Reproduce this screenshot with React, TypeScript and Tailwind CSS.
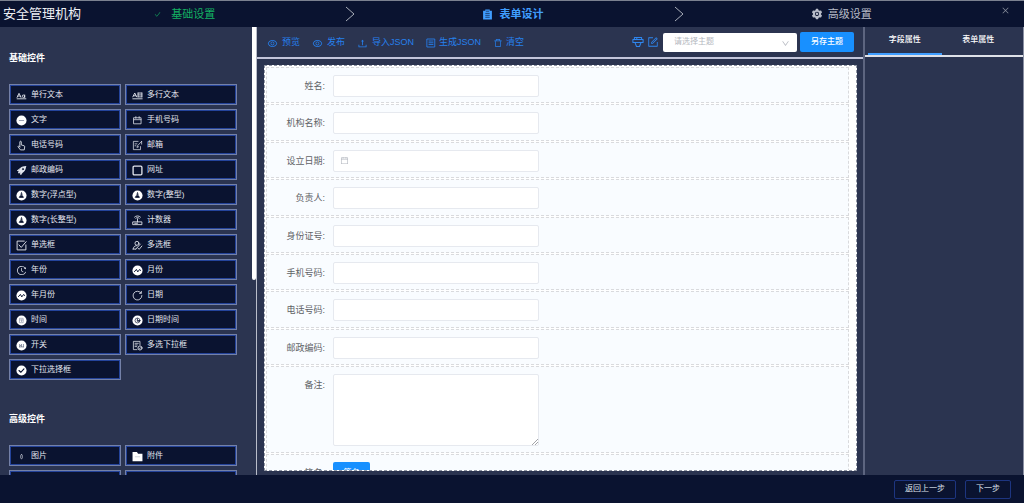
import type { ReactNode } from 'react';
import {
  AiFillSetting,
  AiOutlineCalendar,
  AiOutlineCheck,
  AiOutlineClose,
  AiOutlineDelete,
  AiOutlineDown,
  AiOutlineEye,
  AiOutlineForm,
  AiOutlineHistory,
  AiOutlineUpload,
} from 'react-icons/ai';

function Svg({ children, className = 'size-[11px]' }: { children: ReactNode; className?: string }) {
  return (
    <svg
      viewBox="0 0 20 20"
      className={className}
      fill="none"
      stroke="currentColor"
      strokeWidth="1.6"
      strokeLinecap="round"
      strokeLinejoin="round"
      aria-hidden="true"
    >
      {children}
    </svg>
  );
}

function Disc({ children }: { children: ReactNode }) {
  return (
    <Svg>
      <circle cx="10" cy="10" r="9.2" fill="#fff" stroke="none" />
      <g stroke="#0a1330">{children}</g>
    </Svg>
  );
}

const icons: Record<string, ReactNode> = {
  text: (
    <Svg>
      <path d="M2 13.5 5.5 6 9 13.5M3.3 11h4.4M2 16h16" />
      <circle cx="13.5" cy="11.3" r="2.2" />
      <path d="M15.8 9v4.8" />
    </Svg>
  ),
  textarea: (
    <Svg>
      <path d="M1.5 12.5 5 5.5l3.5 7M3 10.5h4M1.5 16h17M11 5.5h7M11 9h7M11 12.5h7M11 5.5v7M18 5.5v7" />
    </Svg>
  ),
  words: (
    <Disc>
      <path d="M6 10h8" stroke="#8d94a8" />
    </Disc>
  ),
  phone: (
    <Svg>
      <path d="M3.5 5h13v11h-13zM3.5 8.5h13M7 3v3M13 3v3" strokeWidth="1.4" />
    </Svg>
  ),
  touch: (
    <Svg>
      <path d="M7 12.500V3.500a1.300 1.300 0 0 1 2.600 0V9l5 1.400c1 .3 1.400 1 1.200 2L15 18H8L3.500 12c.6-1.300 2-1.400 3.500.5" />
    </Svg>
  ),
  mail: (
    <Svg>
      <path d="M11 2.5H2.5v15h13V12M17.5 2.5 10 10.5l-1 3 3-1.2M5.5 7H9M5.5 10.5H7M17.5 2.5v5" strokeWidth="1.3" />
    </Svg>
  ),
  postcode: (
    <Svg>
      <path
        d="M17.5 3c-5 0-9 1-11 4.5L2.5 10l3.3 1-1.3 3.5L8 13.8 8.8 17.500l2.700-3.700C15 12 17 8.500 17.500 3Z"
        fill="currentColor"
      />
      <circle cx="12.500" cy="7.500" r="1" stroke="#0a1330" />
    </Svg>
  ),
  url: (
    <Svg>
      <rect x="2" y="2" width="16" height="16" rx="2" strokeWidth="2.400" />
    </Svg>
  ),
  number: (
    <Disc>
      <path d="M10 4.500v5M8.300 7.500h3.400M6.500 13.500h7l-1.500-3H8z" fill="#0a1330" strokeWidth="1.300" />
    </Disc>
  ),
  counter: (
    <Svg>
      <path d="M2 12.500h16v5H2zM10 12.500V7M5 15h5M6.800 6a4.200 4.200 0 0 1 6.400 0M4.600 3.800a7.300 7.300 0 0 1 10.800 0" />
    </Svg>
  ),
  radio: (
    <Svg>
      <path d="M18 9v9H2V2h13M5.500 9l4 4.500L18.500 3" strokeWidth="1.700" />
    </Svg>
  ),
  checkbox: (
    <Svg>
      <circle cx="9" cy="6" r="3.600" />
      <path d="M2 16.500c.5-4 3-6 6-6.200M2 16.500h5M15 7.500l-8 9M10.500 14.500l2.500 2.500 5-6" />
    </Svg>
  ),
  history: <AiOutlineHistory className="size-[11px]" />,
  month: (
    <Disc>
      <path d="m4.500 12 3.500-4 2.500 4.500L14 8l1.500 2" strokeWidth="1.800" />
    </Disc>
  ),
  date: (
    <Svg>
      <path d="M16.500 5.500A8 8 0 1 0 18 10M17 2.500v3.500h-3.500" strokeWidth="1.500" />
    </Svg>
  ),
  time: (
    <Disc>
      <path d="M7 6h6v8H7zM7 9h6M10 9v3" stroke="#8d94a8" strokeWidth="1.200" />
    </Disc>
  ),
  datetime: (
    <Disc>
      <circle cx="10" cy="10" r="4.500" strokeWidth="1.200" />
      <path d="M10 7v3h4v1.500h-4z" fill="#0a1330" strokeWidth="1" />
    </Disc>
  ),
  toggle: (
    <Disc>
      <path d="M6.500 12.500V8L10 12V8M13.500 8v4.500M6.500 12.500h7" stroke="#59617c" strokeWidth="1.200" />
    </Disc>
  ),
  multi: (
    <Svg>
      <path d="M9 17.500H2.500v-15h12V9M5.500 6h6M5.500 9h4M5.500 12h3" strokeWidth="1.400" />
      <circle cx="14.500" cy="14.500" r="3.700" />
      <path d="m12.800 14.500 1.400 1.300 2.200-2.500" strokeWidth="1.200" />
    </Svg>
  ),
  select: (
    <Disc>
      <path d="m5.500 10 3.200 3.200L14.500 7" strokeWidth="2" />
    </Disc>
  ),
  image: (
    <Svg>
      <rect x="8.500" y="6.500" width="3" height="7.500" rx="1.500" strokeWidth="1.100" />
    </Svg>
  ),
  file: (
    <Svg>
      <path d="M1 2h8l2 3h8v13.500H1z" fill="#fff" stroke="none" />
      <path d="M6 10.500h8" stroke="#b9bdca" strokeWidth="1.200" />
    </Svg>
  ),
};

const basic: [string, string][] = [
  ['text', '单行文本'],
  ['textarea', '多行文本'],
  ['words', '文字'],
  ['phone', '手机号码'],
  ['touch', '电话号码'],
  ['mail', '邮箱'],
  ['postcode', '邮政编码'],
  ['url', '网址'],
  ['number', '数字(浮点型)'],
  ['number', '数字(整型)'],
  ['number', '数字(长整型)'],
  ['counter', '计数器'],
  ['radio', '单选框'],
  ['checkbox', '多选框'],
  ['history', '年份'],
  ['month', '月份'],
  ['month', '年月份'],
  ['date', '日期'],
  ['time', '时间'],
  ['datetime', '日期时间'],
  ['toggle', '开关'],
  ['multi', '多选下拉框'],
  ['select', '下拉选择框'],
];

const advanced: [string, string][] = [
  ['image', '图片'],
  ['file', '附件'],
  ['', ''],
  ['', ''],
];

const fields = ['姓名', '机构名称', '设立日期', '负责人', '身份证号', '手机号码', '电话号码', '邮政编码'];

function Palette({ title, items }: { title: string; items: [string, string][] }) {
  return (
    <section>
      <h2 className="text-[9px] leading-4 font-bold text-white">{title}</h2>
      <div className="mt-[18px] grid grid-cols-2 gap-1">
        {items.map(([icon, label], i) => (
          <button
            key={i}
            type="button"
            className="flex h-[21px] items-center gap-1 border border-[#7481a8] bg-[#0a1330] pt-px pl-[6px] text-[8px] text-[#e3e6ee] inset-ring inset-ring-[#24439a]"
          >
            {icons[icon]}
            {label}
          </button>
        ))}
      </div>
    </section>
  );
}

function StepArrow() {
  return (
    <svg viewBox="0 0 10 16" className="h-4 w-[10px] text-[#a9aeb9]" fill="none" stroke="currentColor" aria-hidden="true">
      <path d="m1 1 8 7-8 7" />
    </svg>
  );
}

function Step({ icon, label, tone, last }: { icon: ReactNode; label: string; tone: string; last?: boolean }) {
  return (
    <li className="flex items-center">
      <div className={`flex flex-1 items-center justify-center pr-[3px] text-[11px] ${tone}`}>
        <span className="flex w-[17px] items-center">{icon}</span>
        {label}
      </div>
      {last ? <span className="w-[10px]" /> : <StepArrow />}
    </li>
  );
}

function Tool({ icon, label, tight }: { icon: ReactNode; label: string; tight?: boolean }) {
  return (
    <button type="button" className={tight ? 'flex items-center gap-[3px]' : 'flex items-center gap-1'}>
      {icon}
      {label}
    </button>
  );
}

const rowClass = 'flex items-start gap-2 border border-dashed border-[#d9dadd] bg-[#f9fcff] pt-[7px]';
const labelClass = 'w-[58px] shrink-0 text-right text-[9px] leading-[22px] text-[#606266]';

export default function App() {
  return (
    <div className="flex h-screen flex-col overflow-hidden bg-[#0a1330] font-['Liberation_Sans','Noto_Sans_CJK_SC',sans-serif]">
      <header className="relative h-[27px] shrink-0 border-t border-[#7b8190]">
        <h1 className="absolute top-0 left-[3px] text-[13px] leading-[26px] text-[#eceef3]">安全管理机构</h1>
        <ol className="mr-[12px] ml-[27px] grid h-full grid-cols-3">
          <Step icon={<AiOutlineCheck className="size-[7px]" />} label="基础设置" tone="text-[#13b163]" />
          <Step
            icon={
              <svg viewBox="0 0 20 20" className="size-[11px]" aria-hidden="true">
                <path d="M2 3h4V1h8v2h4v16H2z" fill="currentColor" />
                <path d="M6 8h8M6 11.500h8M6 15h8M7 4h6" stroke="#0a1330" strokeWidth="1.200" />
              </svg>
            }
            label="表单设计"
            tone="font-bold text-[#409eff]"
          />
          <Step icon={<AiFillSetting className="size-[12px]" />} label="高级设置" tone="text-[#b8bcc8]" last />
        </ol>
        <button type="button" aria-label="关闭" className="absolute top-[5px] right-[14px] text-[#878c9a]">
          <AiOutlineClose className="block size-[9px]" />
        </button>
      </header>

      <div className="flex min-h-0 flex-1">
        <aside className="flex w-[257px] shrink-0 overflow-hidden border-r border-[#b9bdca] bg-[#2b3450]">
          <div className="flex flex-1 flex-col gap-[31px] overflow-hidden pt-[23px] pr-[15px] pl-[9px]">
            <Palette title="基础控件" items={basic} />
            <Palette title="高级控件" items={advanced} />
          </div>
          <div className="h-[56.500%] w-1 rounded-b-sm bg-white" />
        </aside>

        <main className="flex min-w-0 flex-1 flex-col bg-[#2b3450]">
          <div className="flex h-8 shrink-0 items-center justify-between border-b-2 border-[#c3c5da] pr-[9px] pl-[10px]">
            <div className="flex items-center gap-3 pt-[2px] text-[9px] text-[#2680ee]">
              <Tool icon={<AiOutlineEye className="size-[11px]" />} label="预览" />
              <Tool icon={<AiOutlineEye className="size-[11px]" />} label="发布" />
              <Tool icon={<AiOutlineUpload className="size-[11px]" />} label="导入JSON" />
              <Tool
                tight
                icon={
                  <Svg className="size-[10px]">
                    <path d="M2.500 2h15v16h-15zM6 6h5M6 9.500h8M6 13h8M13 6h1" strokeWidth="1.700" />
                  </Svg>
                }
                label="生成JSON"
              />
              <Tool tight icon={<AiOutlineDelete className="size-[10px]" />} label="清空" />
            </div>
            <div className="flex items-center gap-[3px] text-[#2f86ee]">
              <button type="button" aria-label="主题">
                <Svg className="block size-3">
                  <path d="M4 6V2.500h12V6M1.500 6h17v5H15l-2.500 6.500h-5L5 11H1.500zM5 11h10M8 3v2" strokeWidth="1.700" />
                </Svg>
              </button>
              <button type="button" aria-label="编辑" className="mr-px">
                <AiOutlineForm className="block size-3" />
              </button>
              <div className="relative flex">
                <select
                  aria-label="请选择主题"
                  className="h-[19px] w-[134px] appearance-none rounded-[2px] bg-white pl-[11px] text-[8px] text-[#b4b8c0]"
                >
                  <option>请选择主题</option>
                </select>
                <AiOutlineDown className="pointer-events-none absolute top-[6px] right-[7px] size-[9px] text-[#b4b8c0]" />
              </div>
              <button type="button" className="h-5 w-[54px] rounded-[2px] bg-[#1890ff] text-[8px] font-medium text-white">
                另存主题
              </button>
            </div>
          </div>

          <div className="mt-[6px] mr-[6px] mb-[4px] ml-[7px] min-h-0 flex-1 overflow-hidden border border-dashed border-[#8f95a3] bg-white pt-px pr-[7px] pl-px">
            <form className="flex flex-col gap-px">
              <div className="flex h-[298px] flex-col gap-px">
                {fields.map((name, i) => (
                  <div key={name} className={`flex-1 ${rowClass}`}>
                    <label htmlFor={`field-${i}`} className={labelClass}>
                      {name}:
                    </label>
                    <div className="flex h-[22px] w-[206px] items-center rounded-[2px] border border-[#e6e9ef] bg-white">
                      {name === '设立日期' && <AiOutlineCalendar className="ml-[6px] size-[9px] shrink-0 text-[#b4b8c0]" />}
                      <input id={`field-${i}`} className="h-full w-full px-2 text-[9px] outline-none" />
                    </div>
                  </div>
                ))}
              </div>
              <div className={`h-[87px] ${rowClass}`}>
                <label htmlFor="remark" className={labelClass}>
                  备注:
                </label>
                <div className="relative flex">
                  <textarea
                    id="remark"
                    className="h-[72px] w-[206px] resize-none rounded-[2px] border border-[#e6e9ef] bg-white px-2 text-[9px] outline-none"
                  />
                  <svg viewBox="0 0 6 6" className="absolute right-px bottom-px size-[6px]" stroke="#8a8d93" aria-hidden="true">
                    <path d="M0 6 6 0M3 6l3-3" strokeWidth="0.800" />
                  </svg>
                </div>
              </div>
              <div className={`h-[37px] ${rowClass}`}>
                <span className={labelClass}>签名:</span>
                <button type="button" className="h-[22px] w-[37px] rounded-[2px] bg-[#1890ff] text-[8px] text-white">
                  签名
                </button>
              </div>
            </form>
          </div>
        </main>

        <aside className="w-[161px] shrink-0 border-r border-l-2 border-r-[#8a90a3] border-l-[#5d6580] bg-[#2b3450]">
          <div className="grid h-[30px] grid-cols-2 border-b-2 border-[#dfe1e8] pr-[8px] pl-[3px] text-[8px] font-medium text-white" role="tablist">
            <button type="button" role="tab" aria-selected="true" className="border-b-2 border-[#409eff]">
              字段属性
            </button>
            <button type="button" role="tab" aria-selected="false" className="border-b-2 border-transparent">
              表单属性
            </button>
          </div>
        </aside>
      </div>

      <footer className="flex h-7 shrink-0 items-center justify-end gap-[9px] pr-[13px] text-[8px] text-[#dde1ea]">
        <button type="button" className="h-[19px] w-[62px] rounded-[2px] border border-[#1d3580]">
          返回上一步
        </button>
        <button type="button" className="h-[19px] w-[46px] rounded-[2px] border border-[#1d3580]">
          下一步
        </button>
      </footer>
    </div>
  );
}
